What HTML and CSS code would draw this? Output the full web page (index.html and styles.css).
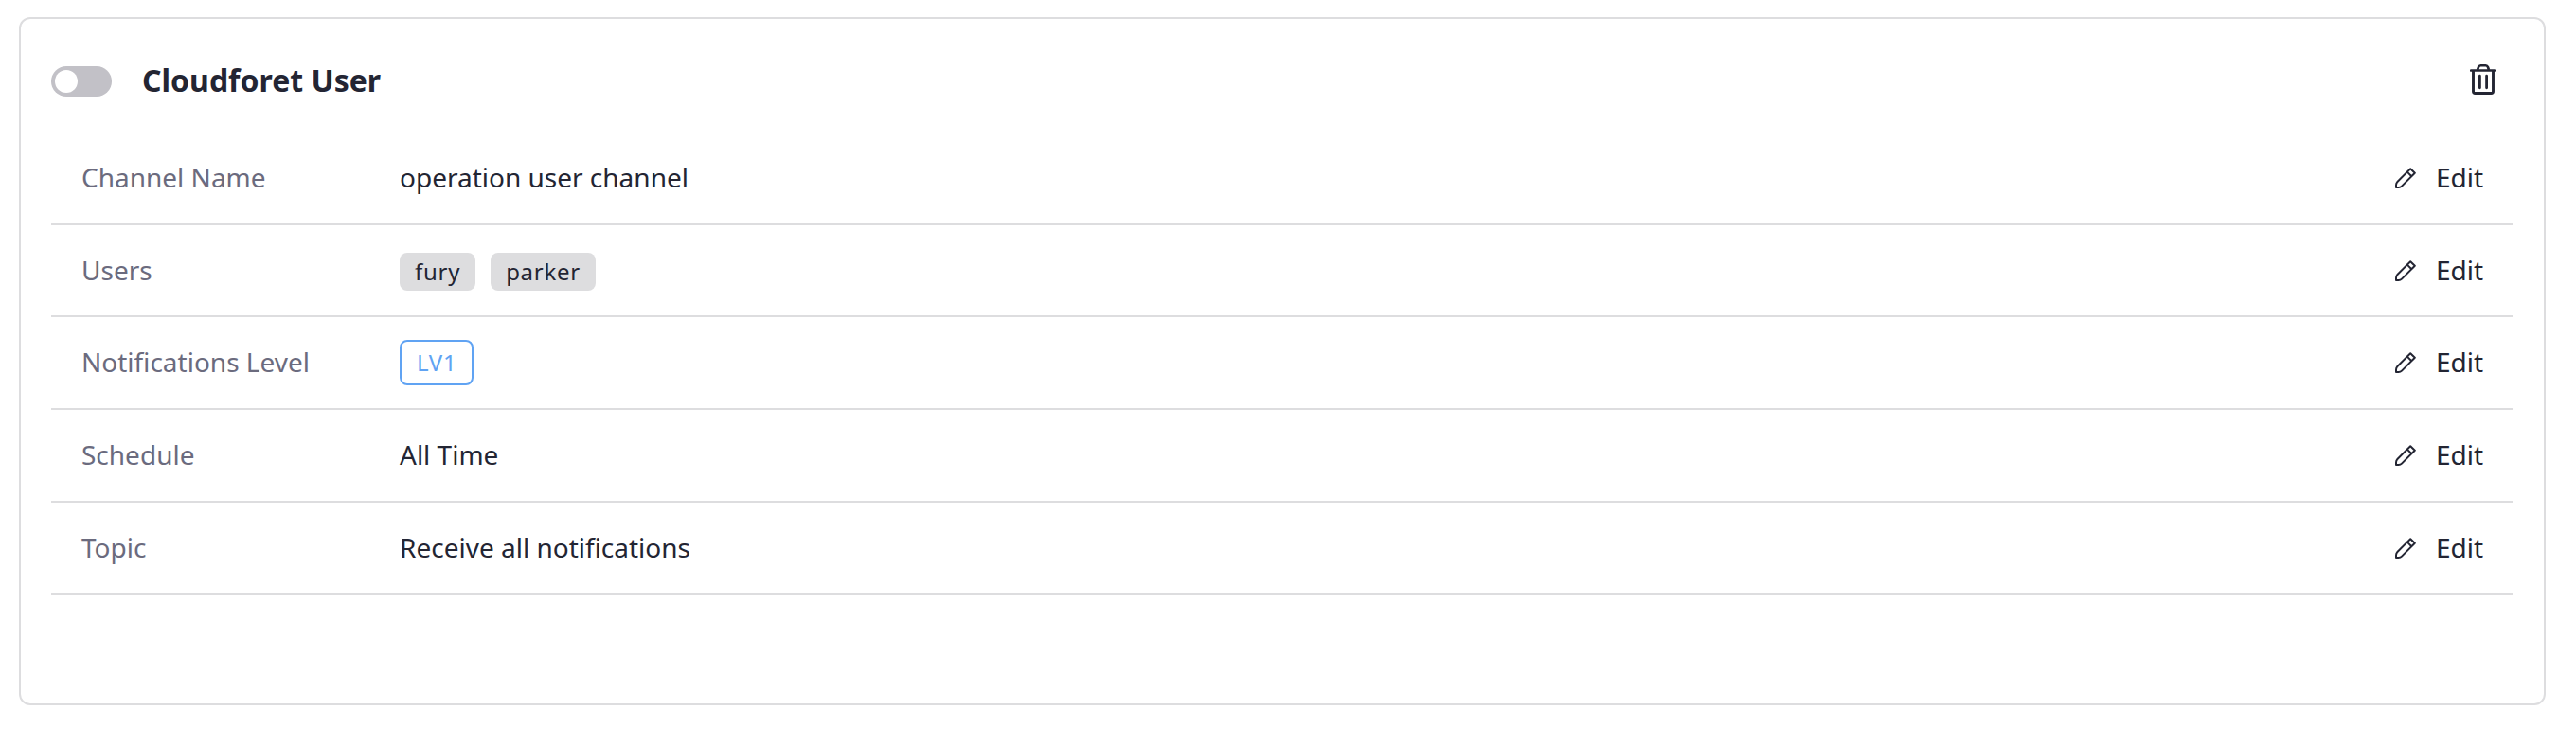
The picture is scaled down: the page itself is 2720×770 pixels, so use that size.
FILE: index.html
```html
<!DOCTYPE html>
<html lang="en">
<head>
<meta charset="utf-8">
<title>Cloudforet User</title>
<link rel="stylesheet" href="styles.css">
</head>
<body>
<svg class="sprite" aria-hidden="true">
  <symbol id="pencil" viewBox="0 0 24 24">
    <path d="M17.2 2.2 21.8 6.8 8 20.6Q6.6 22 4.6 22H2V19.4Q2 17.4 3.4 16Z M13.8 5.6 18.4 10.2" fill="none" stroke="currentColor" stroke-width="2" stroke-linejoin="round"/>
  </symbol>
</svg>
<main class="card">
  <header class="card-header">
    <button class="toggle" aria-label="Toggle channel"><span class="knob"></span></button>
    <h1 class="title">Cloudforet User</h1>
    <button class="delete" aria-label="Delete">
      <svg class="trash" viewBox="0 0 28 32" fill="none" stroke="currentColor">
        <path d="M1.2 6.5H26.8" stroke-width="2.7" stroke-linecap="round"/>
        <path d="M8 6 9 3Q9.7 1.3 11.4 1.3H16.6Q18.3 1.3 19 3L20 6" stroke-width="2.6"/>
        <path d="M3.5 7V28.5Q3.5 30.5 5.5 30.5H22.5Q24.5 30.5 24.5 28.5V7" stroke-width="2.9"/>
        <path d="M10.4 12.2V24.8M17.6 12.2V24.8" stroke-width="2.8" stroke-linecap="round"/>
      </svg>
    </button>
  </header>
  <section class="rows">
    <div class="row">
      <span class="label">Channel Name</span>
      <span class="value">operation user channel</span>
      <button class="edit"><svg class="pencil"><use href="#pencil"/></svg><span class="edit-text">Edit</span></button>
    </div>
    <div class="row short">
      <span class="label">Users</span>
      <span class="tags users"><span class="tag">fury</span><span class="tag">parker</span></span>
      <button class="edit"><svg class="pencil"><use href="#pencil"/></svg><span class="edit-text">Edit</span></button>
    </div>
    <div class="row">
      <span class="label">Notifications Level</span>
      <span class="tags"><span class="badge">LV1</span></span>
      <button class="edit"><svg class="pencil"><use href="#pencil"/></svg><span class="edit-text">Edit</span></button>
    </div>
    <div class="row">
      <span class="label">Schedule</span>
      <span class="value">All Time</span>
      <button class="edit"><svg class="pencil"><use href="#pencil"/></svg><span class="edit-text">Edit</span></button>
    </div>
    <div class="row short">
      <span class="label">Topic</span>
      <span class="value">Receive all notifications</span>
      <button class="edit"><svg class="pencil"><use href="#pencil"/></svg><span class="edit-text">Edit</span></button>
    </div>
  </section>
</main>
</body>
</html>
```

FILE: styles.css
```css
* { box-sizing: border-box; }
body {
  margin: 0;
  padding: 18px 32px 25px 20px;
  height: 770px;
  background: #fff;
  color: #232533;
  font-family: "Noto Sans", sans-serif;
  font-size: 28px;
}
button {
  padding: 0;
  border: 0;
  background: none;
  color: inherit;
  font: inherit;
}
.sprite { display: none; }
.card {
  height: 727px;
  padding: 0 32px;
  border: 2px solid #dddddf;
  border-radius: 12px;
  background: #fff;
}
.card-header {
  display: flex;
  align-items: center;
  height: 120px;
  padding: 12px 18px 0 0;
}
.toggle {
  display: flex;
  align-items: center;
  width: 64px;
  height: 32px;
  padding: 4px;
  border-radius: 16px;
  background: #c2c1c7;
}
.knob {
  width: 24px;
  height: 24px;
  border-radius: 50%;
  background: #fff;
}
.title {
  flex: 1;
  margin: 0 0 0 32px;
  padding-bottom: 2px;
  font-size: 32px;
  font-weight: 700;
  line-height: 40px;
}
.delete { padding-bottom: 4px; }
.trash {
  display: block;
  width: 28px;
  height: 32px;
}
.row {
  display: grid;
  grid-template-columns: 336px 1fr auto;
  align-items: center;
  height: 98px;
  padding: 0 32px;
  border-bottom: 2px solid #dddddf;
  line-height: 40px;
}
.row.short { height: 97px; }
.label, .value, .edit-text { padding-bottom: 2px; }
.label { color: #6b6b7e; }
.tags {
  display: flex;
  align-items: center;
  gap: 16px;
}
.users { padding-top: 3px; }
.tag, .badge {
  height: 40px;
  padding: 0 16px;
  border-radius: 8px;
  background: #dddddf;
  font-size: 24px;
  letter-spacing: 0.72px;
  line-height: 40px;
}
.badge {
  height: 48px;
  border: 2px solid #60a3f3;
  background: #fff;
  color: #60a3f3;
  line-height: 44px;
}
.edit {
  display: flex;
  align-items: center;
  gap: 20px;
  line-height: 40px;
}
.pencil { width: 24px; height: 24px; }
```
